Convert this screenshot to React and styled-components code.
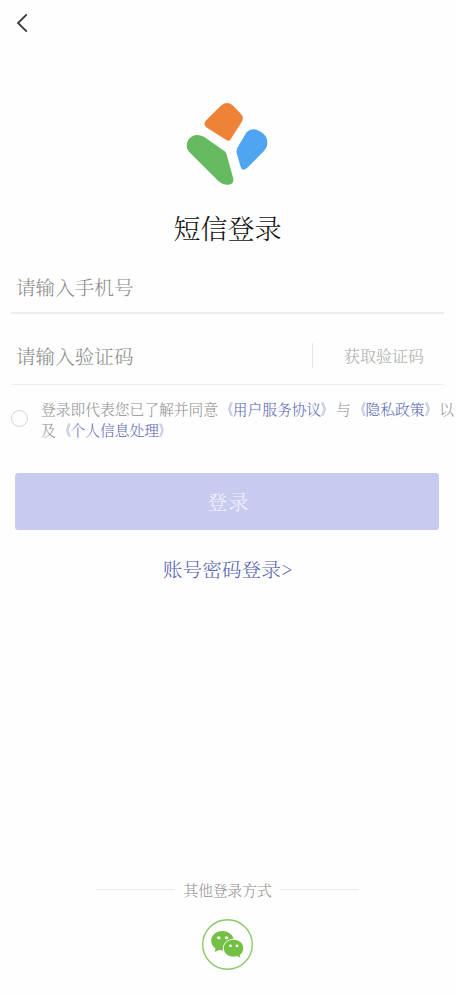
import React from "react";
import styled, { createGlobalStyle } from "styled-components";

const GlobalStyle = createGlobalStyle`
  * { box-sizing: border-box; }
  body { margin: 0; background: #fefefe; }
  button, input { font: inherit; border: 0; background: none; padding: 0; margin: 0; outline: 0; }
`;

const Page = styled.main`
  width: 457px;
  height: 994px;
  overflow: hidden;
  display: flex;
  flex-direction: column;
  background: #fefefe;
  font-family: "Noto Serif CJK SC", "Noto Sans CJK SC", serif;
  font-weight: 300;
  color: #8c8c8c;
`;

const TopBar = styled.header`
  height: 102px;
  padding: 13px 0 0 16px;
`;

const BackButton = styled.button`
  display: block;
  width: 12px;
  height: 20px;
  svg { display: block; }
`;

const Logo = styled.svg`
  display: block;
  width: 84px;
  height: 84px;
  margin-left: 185px;
  flex: none;
`;

const Title = styled.h1`
  margin: 22px 0 0;
  height: 40px;
  padding-right: 2px;
  font-size: 27px;
  line-height: 40px;
  font-weight: 300;
  text-align: center;
  color: #111;
`;

const Field = styled.div`
  display: flex;
  align-items: center;
  flex: none;
  height: ${(p) => p.$height}px;
  margin: 0 13px 0 11px;
  padding: ${(p) => p.$top}px 0 0 5px;
  border-bottom: ${(p) => p.$line}px solid #eeeeef;
`;

const Input = styled.input`
  width: 250px;
  height: 30px;
  font-size: 19.6px;
  font-weight: 300;
  color: #333;
  &::placeholder { color: #8c8c8c; opacity: 1; }
`;

const CodeButton = styled.button`
  height: 25px;
  margin-left: auto;
  padding: 0 20px 0 31px;
  border-left: 1px solid #e6e6e6;
  font-size: 16px;
  line-height: 25px;
  color: #ababab;
`;

const Agreement = styled.div`
  display: flex;
  height: 88px;
  padding: 13px 0 0 11px;
`;

const Radio = styled.span`
  flex: none;
  width: 17px;
  height: 17px;
  margin: 12px 13px 0 0;
  border: 1px solid #d4d4d4;
  border-radius: 50%;
`;

const Terms = styled.p`
  margin: 0;
  font-size: 14.75px;
  line-height: 21px;
  white-space: nowrap;
  color: #929292;
`;

const TermsLink = styled.span`
  color: #5c68b4;
`;

const Bracket = styled.span`
  display: inline-block;
  width: 1em;
  font-weight: 500;
  transform: scaleX(0.64);
  transform-origin: ${(p) => p.$side} center;
`;

const LoginButton = styled.button`
  flex: none;
  height: 57px;
  margin: 0 18px 0 15px;
  padding: 0 0 0 3px;
  border-radius: 3px;
  background: #c8caf0;
  color: #f3f3fc;
  font-size: 20px;
  letter-spacing: 1.2px;
`;

const PasswordLogin = styled.button`
  align-self: center;
  height: 30px;
  margin: 24px 2px 0 0;
  font-size: 19.7px;
  line-height: 30px;
  color: #5661ad;
`;

const Others = styled.footer`
  margin-top: auto;
  padding-bottom: 23px;
  display: flex;
  flex-direction: column;
  align-items: center;
  padding-right: 2px;
`;

const Divider = styled.div`
  display: flex;
  align-items: center;
  gap: 8px;
  width: 263px;
  height: 22px;
  margin-bottom: 18px;
  font-size: 14.7px;
  white-space: nowrap;
  color: #929292;
  &::before, &::after {
    content: "";
    flex: 1;
    height: 1px;
    background: #e9e9ee;
  }
`;

const WeChat = styled.svg`
  display: block;
  width: 53px;
  height: 53px;
`;

function Policy({ children }) {
  return (
    <TermsLink>
      <Bracket $side="right">《</Bracket>
      {children}
      <Bracket $side="left">》</Bracket>
    </TermsLink>
  );
}

export default function App() {
  return (
    <>
      <GlobalStyle />
      <Page>
        <TopBar>
          <BackButton aria-label="返回">
            <svg width="12" height="20" viewBox="0 0 12 20" fill="none" stroke="#383838" strokeWidth="1.8">
              <path d="M10.8 1.3 2 10l8.8 8.7" />
            </svg>
          </BackButton>
        </TopBar>
        <Logo viewBox="45 36 252 252">
          <path fill="#ee8338" d="M155 45q16-12 32 0l24 25q13 12 4 26l-34 53q-4 6-12 1l-58-37q-13-8-4-21z" />
          <path fill="#65b95f" d="M55 149q18-23 47-9l62 44q5 4 6 10l20 72q2 16-15 18-17 1-30-11L57 185q-13-15-2-36z" />
          <path fill="#50a5f0" d="M230 126q16-15 38-3 31 15 22 48l-8 12-50 50q-16 13-20-2l-12-42q-2-8 3-17z" />
        </Logo>
        <Title>短信登录</Title>
        <Field $height={66} $top={12} $line={2}>
          <Input placeholder="请输入手机号" />
        </Field>
        <Field $height={71} $top={13} $line={1}>
          <Input placeholder="请输入验证码" />
          <CodeButton>获取验证码</CodeButton>
        </Field>
        <Agreement>
          <Radio />
          <Terms>
            登录即代表您已了解并同意<Policy>用户服务协议</Policy>与<Policy>隐私政策</Policy>以
            <br />
            及<Policy>个人信息处理</Policy>
          </Terms>
        </Agreement>
        <LoginButton>登录</LoginButton>
        <PasswordLogin>账号密码登录&gt;</PasswordLogin>
        <Others>
          <Divider>其他登录方式</Divider>
          <WeChat viewBox="0 0 53 53">
            <circle cx="26.5" cy="26.5" r="24.8" fill="#fefefe" stroke="#8bc968" strokeWidth="1.4" />
            <path fill="#74c044" d="M21.5 13c-6.4 0-11.3 4.4-11.3 9.8 0 3.2 1.6 5.8 4.3 7.6l-.7 3.7 4.2-2.2c1.1.3 2.3.5 3.5.5 6.4 0 11.3-4.3 11.3-9.6s-4.9-9.8-11.3-9.8z" />
            <path fill="#74c044" stroke="#fefefe" strokeWidth="1" d="M32.5 21.3c-5.7 0-10.2 3.9-10.2 8.9s4.5 8.9 10.2 8.9c1.3 0 2.5-.2 3.6-.6l3.9 2-.8-3.4c2.2-1.6 3.5-4 3.5-6.9 0-5-4.5-8.9-10.2-8.9z" />
            <g fill="#fefefe">
              <ellipse cx="17.7" cy="19.8" rx="1.8" ry="1.5" />
              <ellipse cx="25.6" cy="19.8" rx="1.8" ry="1.5" />
              <ellipse cx="29.5" cy="27.7" rx="1.5" ry="1.2" />
              <ellipse cx="36" cy="27.7" rx="1.5" ry="1.2" />
            </g>
          </WeChat>
        </Others>
      </Page>
    </>
  );
}
